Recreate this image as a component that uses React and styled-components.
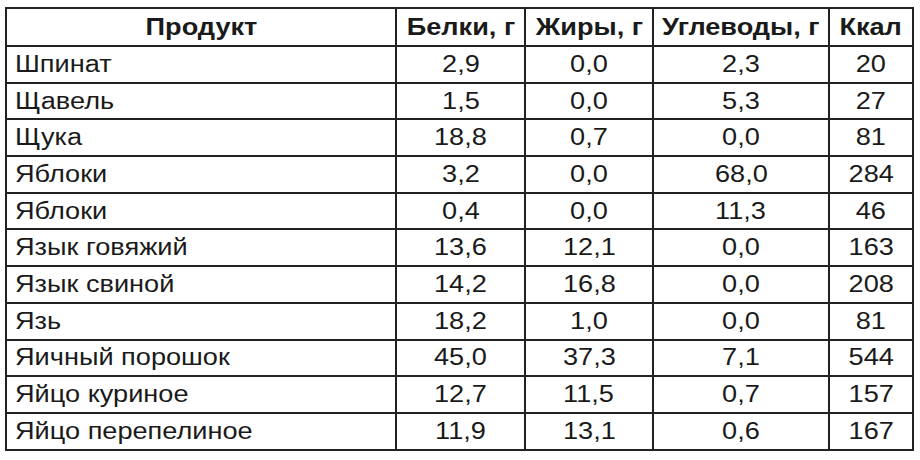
import React from 'react';
import styled, { createGlobalStyle } from 'styled-components';

const GlobalStyle = createGlobalStyle`
    html, body {
        margin: 0;
        padding: 0;
        background: #ffffff;
    }
`;

const Page = styled.div`
    width: 920px;
    height: 460px;
    padding: 7px 0 0 5px;
    box-sizing: border-box;
    background: #ffffff;
`;

const Table = styled.table`
    border-collapse: collapse;
    table-layout: fixed;
    width: 907px;
    font-family: 'Liberation Sans', Arial, sans-serif;
    font-size: 23px;
    color: #1a1a1a;
`;

const HeadRow = styled.tr`
    height: 38px;
`;

const Row = styled.tr`
    height: 36.7px;
`;

const Th = styled.th`
    border: 2px solid #222222;
    font-size: 24px;
    font-weight: bold;
    text-align: center;
    padding: 0 4px;
    white-space: nowrap;
`;

const Td = styled.td`
    border: 2px solid #222222;
    padding: 0 ${({ $left }) => ($left ? '8px' : '4px')};
    text-align: ${({ $left }) => ($left ? 'left' : 'center')};
    white-space: nowrap;
    line-height: 1;
`;

// the source image is stretched wide, so the glyphs are widened to match
const Text = styled.span`
    display: inline-block;
    transform: scaleX(${({ $scale }) => $scale});
    transform-origin: ${({ $left }) => ($left ? 'left center' : 'center')};
`;

const columns = [
    { title: 'Продукт', width: 390 },
    { title: 'Белки, г', width: 129 },
    { title: 'Жиры, г', width: 128 },
    { title: 'Углеводы, г', width: 176 },
    { title: 'Ккал', width: 84 },
];

const data = [
    ['Шпинат', '2,9', '0,0', '2,3', '20'],
    ['Щавель', '1,5', '0,0', '5,3', '27'],
    ['Щука', '18,8', '0,7', '0,0', '81'],
    ['Яблоки', '3,2', '0,0', '68,0', '284'],
    ['Яблоки', '0,4', '0,0', '11,3', '46'],
    ['Язык говяжий', '13,6', '12,1', '0,0', '163'],
    ['Язык свиной', '14,2', '16,8', '0,0', '208'],
    ['Язь', '18,2', '1,0', '0,0', '81'],
    ['Яичный порошок', '45,0', '37,3', '7,1', '544'],
    ['Яйцо куриное', '12,7', '11,5', '0,7', '157'],
    ['Яйцо перепелиное', '11,9', '13,1', '0,6', '167'],
];

const App = () => (
    <>
        <GlobalStyle />
        <Page>
            <Table>
                <colgroup>
                    {columns.map(c => (
                        <col key={c.title} style={{ width: c.width }} />
                    ))}
                </colgroup>
                <thead>
                    <HeadRow>
                        {columns.map(c => (
                            <Th key={c.title}>
                                <Text $scale={1.13}>{c.title}</Text>
                            </Th>
                        ))}
                    </HeadRow>
                </thead>
                <tbody>
                    {data.map((row, i) => (
                        <Row key={i}>
                            {row.map((cell, j) => (
                                <Td key={j} $left={j === 0}>
                                    <Text $scale={1.18} $left={j === 0}>
                                        {cell}
                                    </Text>
                                </Td>
                            ))}
                        </Row>
                    ))}
                </tbody>
            </Table>
        </Page>
    </>
);

export default App;
